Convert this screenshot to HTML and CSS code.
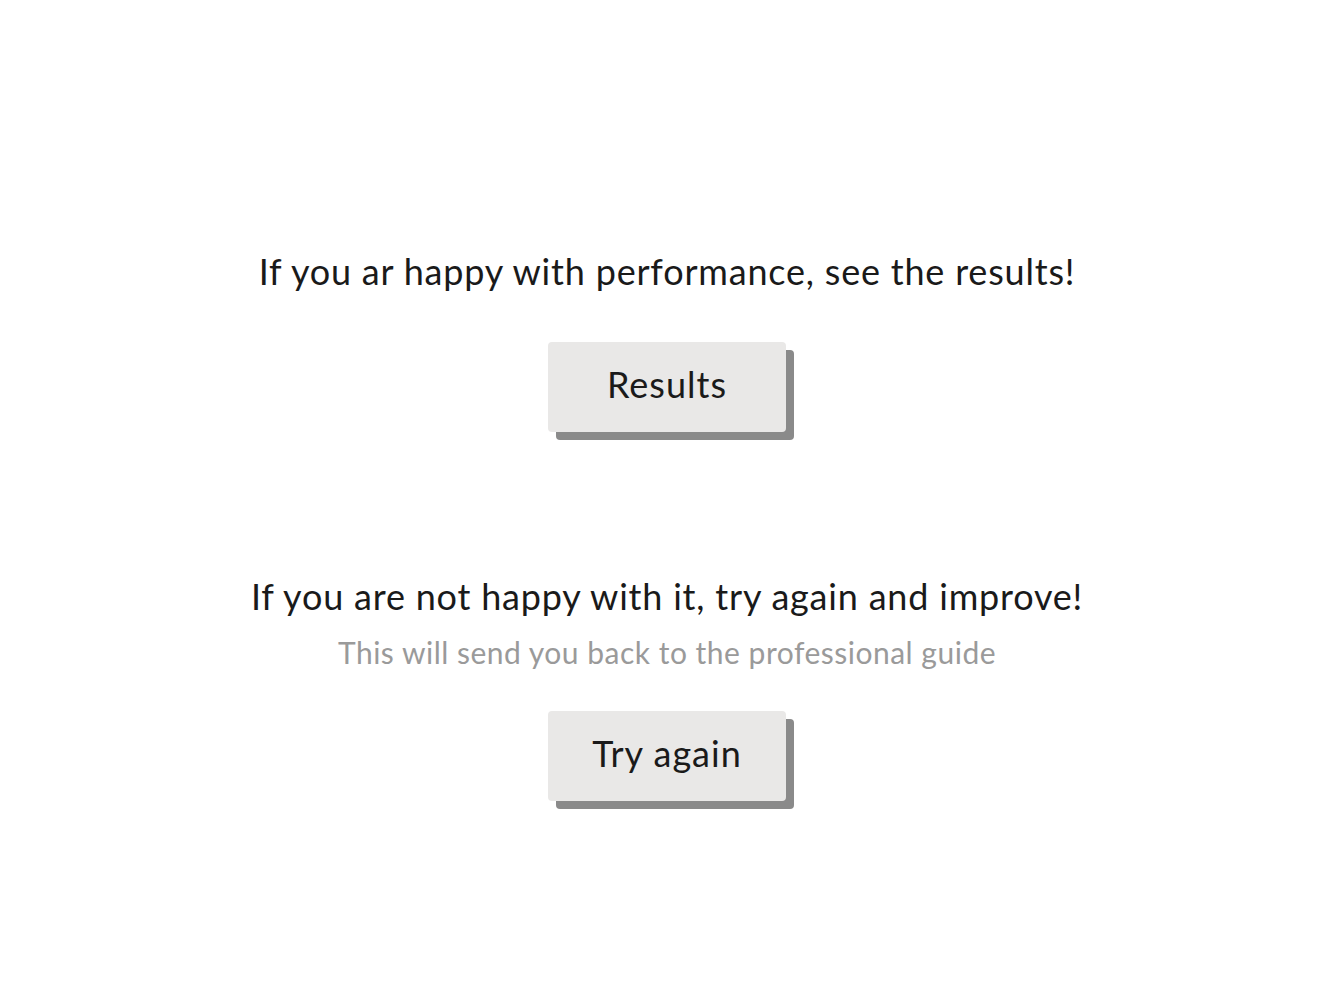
FILE: index.html
```html
<!DOCTYPE html>
<html>
<head>
<meta charset="utf-8">
<link rel="stylesheet" href="styles.css">
</head>
<body>
<main class="page">
  <section class="block block-results">
    <h2 class="title">If you ar happy with performance, see the results!</h2>
    <button class="btn">Results</button>
  </section>
  <section class="block block-retry">
    <h2 class="title">If you are not happy with it, try again and improve!</h2>
    <p class="sub">This will send you back to the professional guide</p>
    <button class="btn">Try again</button>
  </section>
</main>
</body>
</html>
```
FILE: styles.css
```css
html, body {
  margin: 0;
  padding: 0;
  background: #fff;
}
body {
  font-family: Lato, "Open Sans", sans-serif;
  color: #1a1a1a;
}
.page {
  display: flex;
  flex-direction: column;
  align-items: center;
  padding-top: 247px;
  padding-bottom: 120px;
}
.block {
  display: flex;
  flex-direction: column;
  align-items: center;
}
.block-retry {
  margin-top: 140px;
}
.title {
  margin: 0;
  font-size: 36px;
  font-weight: 400;
  line-height: 48px;
  letter-spacing: 0.8px;
}
.sub {
  margin: 14px 0 0;
  font-size: 30px;
  line-height: 36px;
  color: #9a9a9a;
  letter-spacing: 0.5px;
}
.btn {
  margin-top: 47px;
  width: 238px;
  height: 90px;
  border: none;
  border-radius: 4px;
  background: #e9e8e7;
  box-shadow: 8px 8px 0 #8a8a8a;
  font-family: inherit;
  font-size: 36px;
  color: #1a1a1a;
  letter-spacing: 1px;
  padding: 0 0 6px;
}
.block-retry .btn {
  margin-top: 41px;
}
```
